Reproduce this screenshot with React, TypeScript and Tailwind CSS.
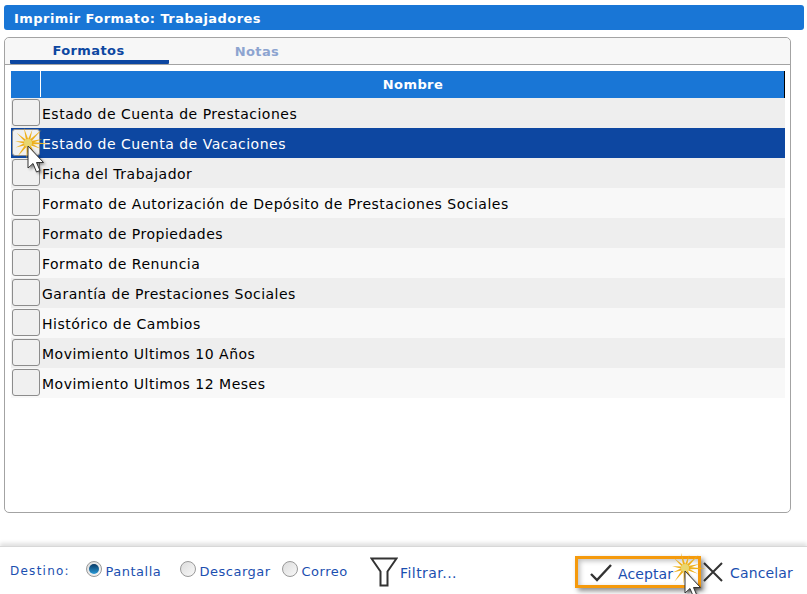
const FONT = "font-['DejaVu_Sans','Verdana',sans-serif]";

const ROWS = [
  "Estado de Cuenta de Prestaciones",
  "Estado de Cuenta de Vacaciones",
  "Ficha del Trabajador",
  "Formato de Autorización de Depósito de Prestaciones Sociales",
  "Formato de Propiedades",
  "Formato de Renuncia",
  "Garantía de Prestaciones Sociales",
  "Histórico de Cambios",
  "Movimiento Ultimos 10 Años",
  "Movimiento Ultimos 12 Meses",
];

// [angle, length] of each spike in the click burst
const SPIKES = [
  [2, 21], [24, 14], [60, 15], [95, 16], [128, 17], [160, 13],
  [188, 13], [222, 15], [255, 16], [288, 14], [316, 19], [345, 15],
];

function spikePoints(cx: number, cy: number, angle: number, len: number) {
  const a = (angle * Math.PI) / 180;
  const nx = -Math.sin(a) * 1.5;
  const ny = Math.cos(a) * 1.5;
  const tip = `${cx + Math.cos(a) * len},${cy + Math.sin(a) * len}`;
  return `${cx + nx},${cy + ny} ${tip} ${cx - nx},${cy - ny}`;
}

// yellow click burst + arrow pointer used by the tutorial capture
function ClickCursor({ className, id }: { className: string; id: string }) {
  return (
    <svg className={className} width="42" height="54" viewBox="0 0 42 54">
      <defs>
        <filter id={id} x="-50%" y="-50%" width="200%" height="200%">
          <feGaussianBlur stdDeviation="1.8" />
        </filter>
      </defs>
      {SPIKES.map(([angle, len]) => (
        <polygon key={angle} points={spikePoints(15, 15, angle, len)} fill="#eeb01c" />
      ))}
      <circle cx="15" cy="15" r="4" fill="#e9d66e" />
      <path d="M15 18v22l5-4.500 3.500 8.500 3.500-1.500-3.500-8h7z" fill="#000" opacity="0.5" filter={`url(#${id})`} transform="translate(2 2)" />
      <path d="M15 18v22l5-4.500 3.500 8.500 3.500-1.500-3.500-8h7z" fill="#fff" stroke="#333" strokeWidth="1" />
    </svg>
  );
}

function Radio({ label, checked }: { label: string; checked?: boolean }) {
  return (
    <div className="flex items-start">
      <span className="relative mt-[-1px] flex h-4 w-4 items-center justify-center rounded-full border border-[#999] bg-gradient-to-br from-[#ddd] to-[#f8f8f8]">
        {checked && <span className="h-[10px] w-[10px] rounded-full bg-gradient-to-b from-[#0a3a66] to-[#2a9bd8]" />}
      </span>
      <span className="ml-[3.500px] mt-[2px] text-[13px] leading-4 tracking-[0.5px] text-[#1b4fb0]">{label}</span>
    </div>
  );
}

export default function App() {
  return (
    <div className={`${FONT} flex h-[594px] w-[807px] flex-col overflow-hidden bg-white`}>
      <div className="mx-1 mt-[5px] flex h-[25px] w-[800px] items-center rounded-[3px] bg-[#1976d6] pl-[10px] pt-[2px] text-[13px] font-bold tracking-[0.45px] text-white">
        Imprimir Formato: Trabajadores
      </div>

      <div className="ml-1 mt-[7px] h-[476px] w-[787px] rounded-[5px] border border-[#a3a3a3] bg-white">
        <div className="flex h-[27px] rounded-t-[5px] border-b border-[#a3a3a3] bg-[#f7f7f7] pl-[5px] text-[13px] font-bold tracking-[0.4px]">
          <div className="flex h-[26px] w-[159px] items-center justify-center rounded-b-[1px] border-b-[4px] border-[#0d47a1] pr-[2px] pt-[3px] text-[#0d47a1]">
            Formatos
          </div>
          <div className="flex h-[26px] w-[176px] items-center justify-center pt-[1px] text-[#8da4d0]">Notas</div>
        </div>

        <div className="ml-[6px] mt-[6px] w-[774px]">
          <div className="flex h-[27px] border-r border-black bg-[#1976d6] text-[13px] font-bold tracking-[0.4px] text-white">
            <div className="mb-[1px] w-[30px] border-r border-white" />
            <div className="flex flex-1 items-center justify-center pl-[1px]">Nombre</div>
          </div>
          {ROWS.map((row, i) => (
            <div
              key={row}
              className={
                i === 1
                  ? "flex h-[30px] items-center bg-[#0d47a1] text-white"
                  : i % 2 === 0
                    ? "flex h-[30px] items-center bg-[#eeeeee] text-black"
                    : "flex h-[30px] items-center bg-[#f8f8f8] text-black"
              }
            >
              <div className="ml-[1px] h-[27px] w-[28px] -translate-y-[1px] rounded-[3px] border border-[#8c8c8c] bg-[#f0f0f0]" />
              <div className="ml-[2px] pt-[2px] text-[14px] tracking-[0.5px]">{row}</div>
            </div>
          ))}
        </div>
      </div>

      <div className="mt-[33px] flex h-[48px] flex-1 items-center border-t border-[#d8d8d8] pl-[10px] shadow-[0_-3px_4px_rgba(0,0,0,0.12)]">
        <span className="w-[76px] text-[12px] tracking-[1.25px] text-[#1b4fb0]">Destino:</span>
        <div className="flex w-[94px]">
          <Radio label="Pantalla" checked />
        </div>
        <div className="flex w-[102px]">
          <Radio label="Descargar" />
        </div>
        <div className="flex w-[88px]">
          <Radio label="Correo" />
        </div>
        <svg className="mt-[3px]" width="28" height="30" viewBox="0 0 28 30" fill="none" stroke="#333" strokeWidth="2">
          <path d="M1.500 1.500h25l-9 13v14h-7v-14z" />
        </svg>
        <span className="ml-[2px] mt-[5px] w-[57px] text-[14px] tracking-[0.45px] text-[#1b4fb0]">Filtrar...</span>

        <div className="relative ml-[118px] mt-[3px] flex h-[32px] w-[126px] items-center border-[3px] border-[#f59a0c] pl-[12px] shadow-[3px_3px_5px_rgba(0,0,0,0.45),inset_2px_2px_5px_rgba(0,0,0,0.25)]">
          <svg className="mt-[2px]" width="22" height="18" viewBox="0 0 22 18" fill="none" stroke="#333" strokeWidth="2.400">
            <path d="M1 10l6 6L21 1" />
          </svg>
          <span className="ml-[6px] mt-[5px] text-[14px] tracking-[0.1px] text-[#1b4fb0]">Aceptar</span>
        </div>
        <svg className="ml-[2px] mt-[3px]" width="20" height="20" viewBox="0 0 20 20" fill="none" stroke="#333" strokeWidth="2">
          <path d="M1 1l18 18M19 1L1 19" />
        </svg>
        <span className="ml-[7px] mt-[5px] text-[14px] tracking-[0.15px] text-[#1b4fb0]">Cancelar</span>
      </div>

      <ClickCursor id="cursorShadowA" className="absolute left-[13px] top-[128px]" />
      <ClickCursor id="cursorShadowB" className="absolute left-[670px] top-[553px]" />
    </div>
  );
}
